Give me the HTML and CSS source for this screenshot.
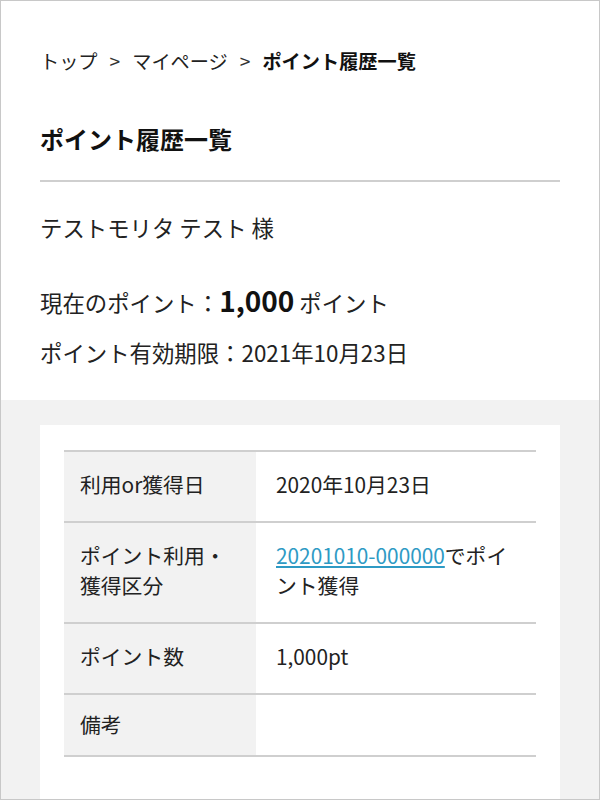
FILE: index.html
```html
<!DOCTYPE html>
<html lang="ja">
<head>
<meta charset="utf-8">
<title>ポイント履歴一覧</title>
<link rel="stylesheet" href="styles.css">
</head>
<body>
<div class="frame">
  <section class="top">
    <nav class="breadcrumb">
      <a class="crumb" href="#">トップ</a><span class="sep">&gt;</span><a class="crumb" href="#">マイページ</a><span class="sep">&gt;</span><strong class="crumb current">ポイント履歴一覧</strong>
    </nav>
    <h1 class="title">ポイント履歴一覧</h1>
    <p class="name">テストモリタ テスト 様</p>
    <p class="points">現在のポイント：<span class="points-num">1,000</span> ポイント</p>
    <p class="expiry">ポイント有効期限：2021年10月23日</p>
  </section>
  <section class="lower">
    <div class="card">
      <div class="history">
        <div class="row">
          <div class="label">利用or獲得日</div>
          <div class="value">2020年10月23日</div>
        </div>
        <div class="row">
          <div class="label">ポイント利用・獲得区分</div>
          <div class="value"><a class="link" href="#">20201010-000000</a>でポイント獲得</div>
        </div>
        <div class="row">
          <div class="label">ポイント数</div>
          <div class="value">1,000pt</div>
        </div>
        <div class="row row-short">
          <div class="label">備考</div>
          <div class="value"></div>
        </div>
      </div>
    </div>
  </section>
</div>
</body>
</html>
```

FILE: styles.css
```css
* {
  box-sizing: border-box;
}

html, body {
  margin: 0;
  padding: 0;
  background: #fff;
}

body {
  font-family: "Noto Sans CJK JP", "Noto Sans", sans-serif;
  color: #222;
}

.frame {
  width: 600px;
  height: 800px;
  border: 1px solid #c8c8c8;
  overflow: hidden;
  background: #f2f2f2;
}

.top {
  background: #fff;
  padding: 46px 39px 31px;
}

.breadcrumb {
  font-size: 19.2px;
  line-height: 28px;
  white-space: nowrap;
}

.crumb {
  color: #222;
  text-decoration: none;
}

.current {
  font-weight: 700;
  color: #111;
}

.sep {
  display: inline-block;
  margin: 0 12px;
  color: #333;
}

.title {
  margin: 46px 0 0;
  padding-bottom: 23px;
  font-size: 24px;
  line-height: 36px;
  font-weight: 700;
  color: #111;
  border-bottom: 2px solid #cfcfcf;
}

.name {
  margin: 28px 0 0;
  font-size: 22.4px;
  line-height: 34px;
}

.points {
  margin: 36px 0 0;
  font-size: 22.4px;
  line-height: 40px;
}

.points-num {
  font-size: 28px;
  font-weight: 700;
  color: #111;
}

.expiry {
  margin: 13px 0 0;
  font-size: 22.4px;
  line-height: 34px;
}

.lower {
  padding: 25px 39px 0;
}

.card {
  background: #fff;
  padding: 25px 24px 60px;
}

.history {
  border-bottom: 2px solid #cfcfcf;
  font-size: 20.8px;
  line-height: 30px;
}

.row {
  display: flex;
  border-top: 2px solid #cfcfcf;
}

.label {
  flex: 0 0 192px;
  background: #f2f2f2;
  padding: 17px 20px 22px 16px;
}

.value {
  flex: 1 1 auto;
  padding: 17px 20px 22px 20px;
}

.row-short .label,
.row-short .value {
  padding-top: 14px;
  padding-bottom: 16px;
}

.link {
  color: #2e9ac4;
  text-decoration: underline;
}
```
